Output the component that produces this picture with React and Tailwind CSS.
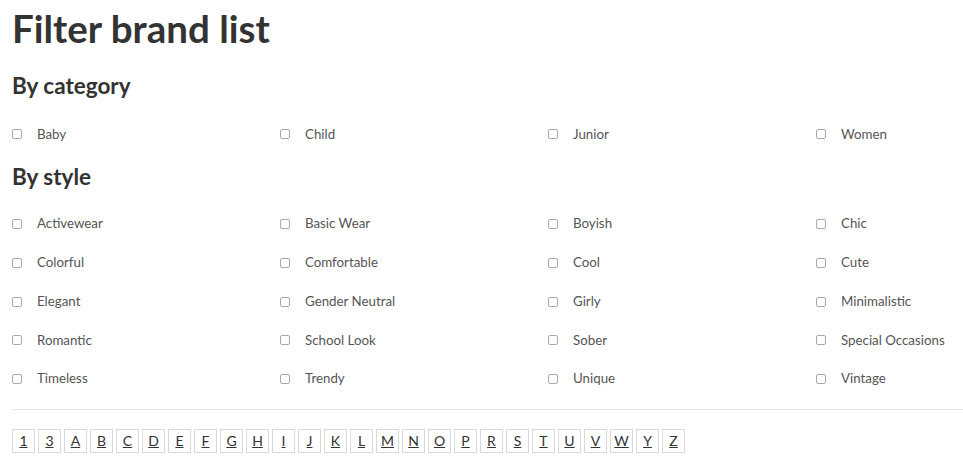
const CATEGORIES = ['Baby', 'Child', 'Junior', 'Women'];

const STYLES = [
  'Activewear', 'Basic Wear', 'Boyish', 'Chic',
  'Colorful', 'Comfortable', 'Cool', 'Cute',
  'Elegant', 'Gender Neutral', 'Girly', 'Minimalistic',
  'Romantic', 'School Look', 'Sober', 'Special Occasions',
  'Timeless', 'Trendy', 'Unique', 'Vintage',
];

const LETTERS = ['1', '3', 'A', 'B', 'C', 'D', 'E', 'F', 'G', 'H', 'I', 'J', 'K', 'L', 'M', 'N', 'O', 'P', 'R', 'S', 'T', 'U', 'V', 'W', 'Y', 'Z'];

function CheckItem({ label }) {
  return (
    <label className="flex items-center h-[38.75px] cursor-pointer">
      <span className="w-[10px] h-[10px] border border-[#a9a9a9] rounded-[2px] bg-white shrink-0" />
      <span className="ml-[15px] text-[13.3px] text-[#555] leading-none">{label}</span>
    </label>
  );
}

function CheckGrid({ items }) {
  return (
    <div className="grid grid-cols-[268px_268px_268px_1fr]">
      {items.map((item) => (
        <CheckItem key={item} label={item} />
      ))}
    </div>
  );
}

export default function App() {
  return (
    <div className="w-[963px] h-[466px] overflow-hidden bg-white pl-3 pt-[5px] font-['Lato','Liberation_Sans',sans-serif]">
      <h1 className="text-[38.5px] leading-[46px] font-bold text-[#333]">Filter brand list</h1>

      <h2 className="mt-[21px] text-[22.5px] leading-[27px] font-bold text-[#333]">By category</h2>
      <div className="mt-[16px]">
        <CheckGrid items={CATEGORIES} />
      </div>

      <h2 className="mt-[9px] text-[22.5px] leading-[27px] font-bold text-[#333]">By style</h2>
      <div className="mt-[15px]">
        <CheckGrid items={STYLES} />
      </div>

      <div className="mt-[10px] border-t border-[#e5e5e5]" />

      <div className="mt-[19px] flex gap-[3px]">
        {LETTERS.map((l) => (
          <a
            key={l}
            href="#"
            className="w-[23px] h-[24px] flex items-center justify-center border border-[#d9d9d9] text-[14px] text-[#333] underline"
          >
            {l}
          </a>
        ))}
      </div>
    </div>
  );
}
